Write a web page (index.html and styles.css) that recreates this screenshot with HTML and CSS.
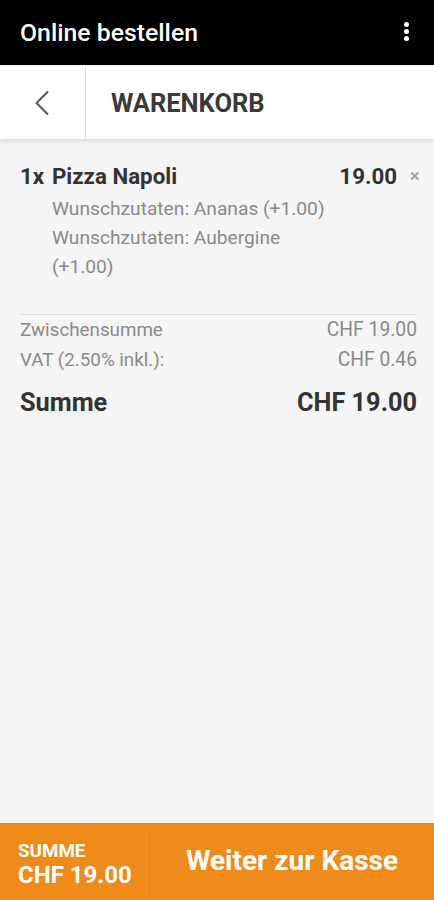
FILE: index.html
```html
<!DOCTYPE html>
<html lang="de">
<head>
<meta charset="utf-8">
<title>Warenkorb</title>
<link rel="stylesheet" href="styles.css">
</head>
<body>
<div class="app">
  <header class="topbar">
    <span class="topbar-title">Online bestellen</span>
    <span class="menu-dots"><i></i><i></i><i></i></span>
  </header>
  <nav class="subbar">
    <div class="back">
      <svg width="16" height="26" viewBox="0 0 16 26"><path d="M14 1.5 L2.5 13 L14 24.5" fill="none" stroke="#555" stroke-width="2"/></svg>
    </div>
    <div class="subbar-title">WARENKORB</div>
  </nav>
  <main class="cart">
    <div class="item">
      <span class="qty">1x</span>
      <div class="item-body">
        <div class="item-name">Pizza Napoli</div>
        <div class="opt">Wunschzutaten: Ananas (+1.00)</div>
        <div class="opt">Wunschzutaten: Aubergine (+1.00)</div>
      </div>
      <span class="price">19.00</span>
      <span class="remove">×</span>
    </div>
    <div class="totals">
      <div class="row small"><span>Zwischensumme</span><span class="val">CHF 19.00</span></div>
      <div class="row small"><span>VAT (2.50% inkl.):</span><span class="val">CHF 0.46</span></div>
      <div class="row big"><span>Summe</span><span>CHF 19.00</span></div>
    </div>
  </main>
  <footer class="checkout">
    <div class="sum">
      <div class="sum-label">SUMME</div>
      <div class="sum-value">CHF 19.00</div>
    </div>
    <div class="go">Weiter zur Kasse</div>
  </footer>
</div>
</body>
</html>
```
FILE: styles.css
```css
* { box-sizing: border-box; }
html, body { margin: 0; padding: 0; }
body {
  font-family: Roboto, "Liberation Sans", Arial, sans-serif;
  background: #f5f5f5;
  color: #333;
}
.app {
  height: 900px;
  display: flex;
  flex-direction: column;
}
.topbar {
  height: 65px;
  background: #000;
  display: flex;
  align-items: center;
  justify-content: space-between;
  padding: 0 25px 0 20px;
  flex-shrink: 0;
}
.topbar-title {
  color: #fff;
  font-size: 24.8px;
  font-weight: 500;
}
.menu-dots {
  display: flex;
  flex-direction: column;
  gap: 2px;
  margin-top: -2px;
}
.menu-dots i {
  display: block;
  width: 5px;
  height: 5px;
  border-radius: 50%;
  background: #fff;
}
.subbar {
  height: 73px;
  margin-top: 1px;
  background: #fff;
  display: flex;
  box-shadow: 0 2px 4px rgba(0,0,0,0.12);
  flex-shrink: 0;
  position: relative;
  z-index: 1;
}
.back {
  width: 86px;
  border-right: 1px solid #e0e0e0;
  display: flex;
  align-items: center;
  justify-content: center;
  padding-right: 2px;
}
.subbar-title {
  display: flex;
  align-items: center;
  padding-left: 25px;
  font-size: 25.5px;
  font-weight: 700;
  color: #3a3a3a;
}
.cart {
  flex: 1;
  padding: 23px 17px 0 20px;
}
.item {
  display: flex;
  align-items: flex-start;
  padding-bottom: 33px;
  border-bottom: 1px solid #dcdcdc;
}
.qty {
  width: 32px;
  font-size: 22.3px;
  font-weight: 700;
  line-height: 28px;
  color: #333;
  flex-shrink: 0;
}
.item-name {
  font-size: 22.3px;
  font-weight: 700;
  line-height: 28px;
  color: #333;
  margin-bottom: 4px;
}
.item-body {
  flex: 1;
  padding-right: 6px;
}
.opt {
  font-size: 19.2px;
  line-height: 29px;
  color: #8a8a8a;
}
.price {
  font-size: 22.3px;
  font-weight: 700;
  line-height: 28px;
  color: #333;
}
.remove {
  width: 23px;
  text-align: right;
  font-size: 19px;
  line-height: 28px;
  color: #a0a0a0;
  margin-right: -3px;
}
.row {
  display: flex;
  justify-content: space-between;
  align-items: baseline;
}
.row.small {
  font-size: 18.8px;
  line-height: 30px;
  color: #8a8a8a;
}
.row.small .val {
  font-size: 19.3px;
}
.row.big {
  margin-top: 13px;
  font-size: 25.3px;
  font-weight: 700;
  line-height: 30px;
  color: #333;
}
.checkout {
  height: 77px;
  background: #ee8b1b;
  display: flex;
  color: #fff;
  flex-shrink: 0;
}
.sum {
  width: 150px;
  padding: 17px 0 0 18px;
  border-right: 1px solid #e3821a;
  margin-top: 10px;
  padding-top: 8px;
}
.sum-label {
  font-size: 18.8px;
  font-weight: 700;
  line-height: 21px;
}
.sum-value {
  font-size: 24px;
  font-weight: 700;
  line-height: 27px;
}
.go {
  flex: 1;
  display: flex;
  align-items: center;
  justify-content: center;
  font-size: 28px;
  font-weight: 700;
  padding-bottom: 3px;
}
```
